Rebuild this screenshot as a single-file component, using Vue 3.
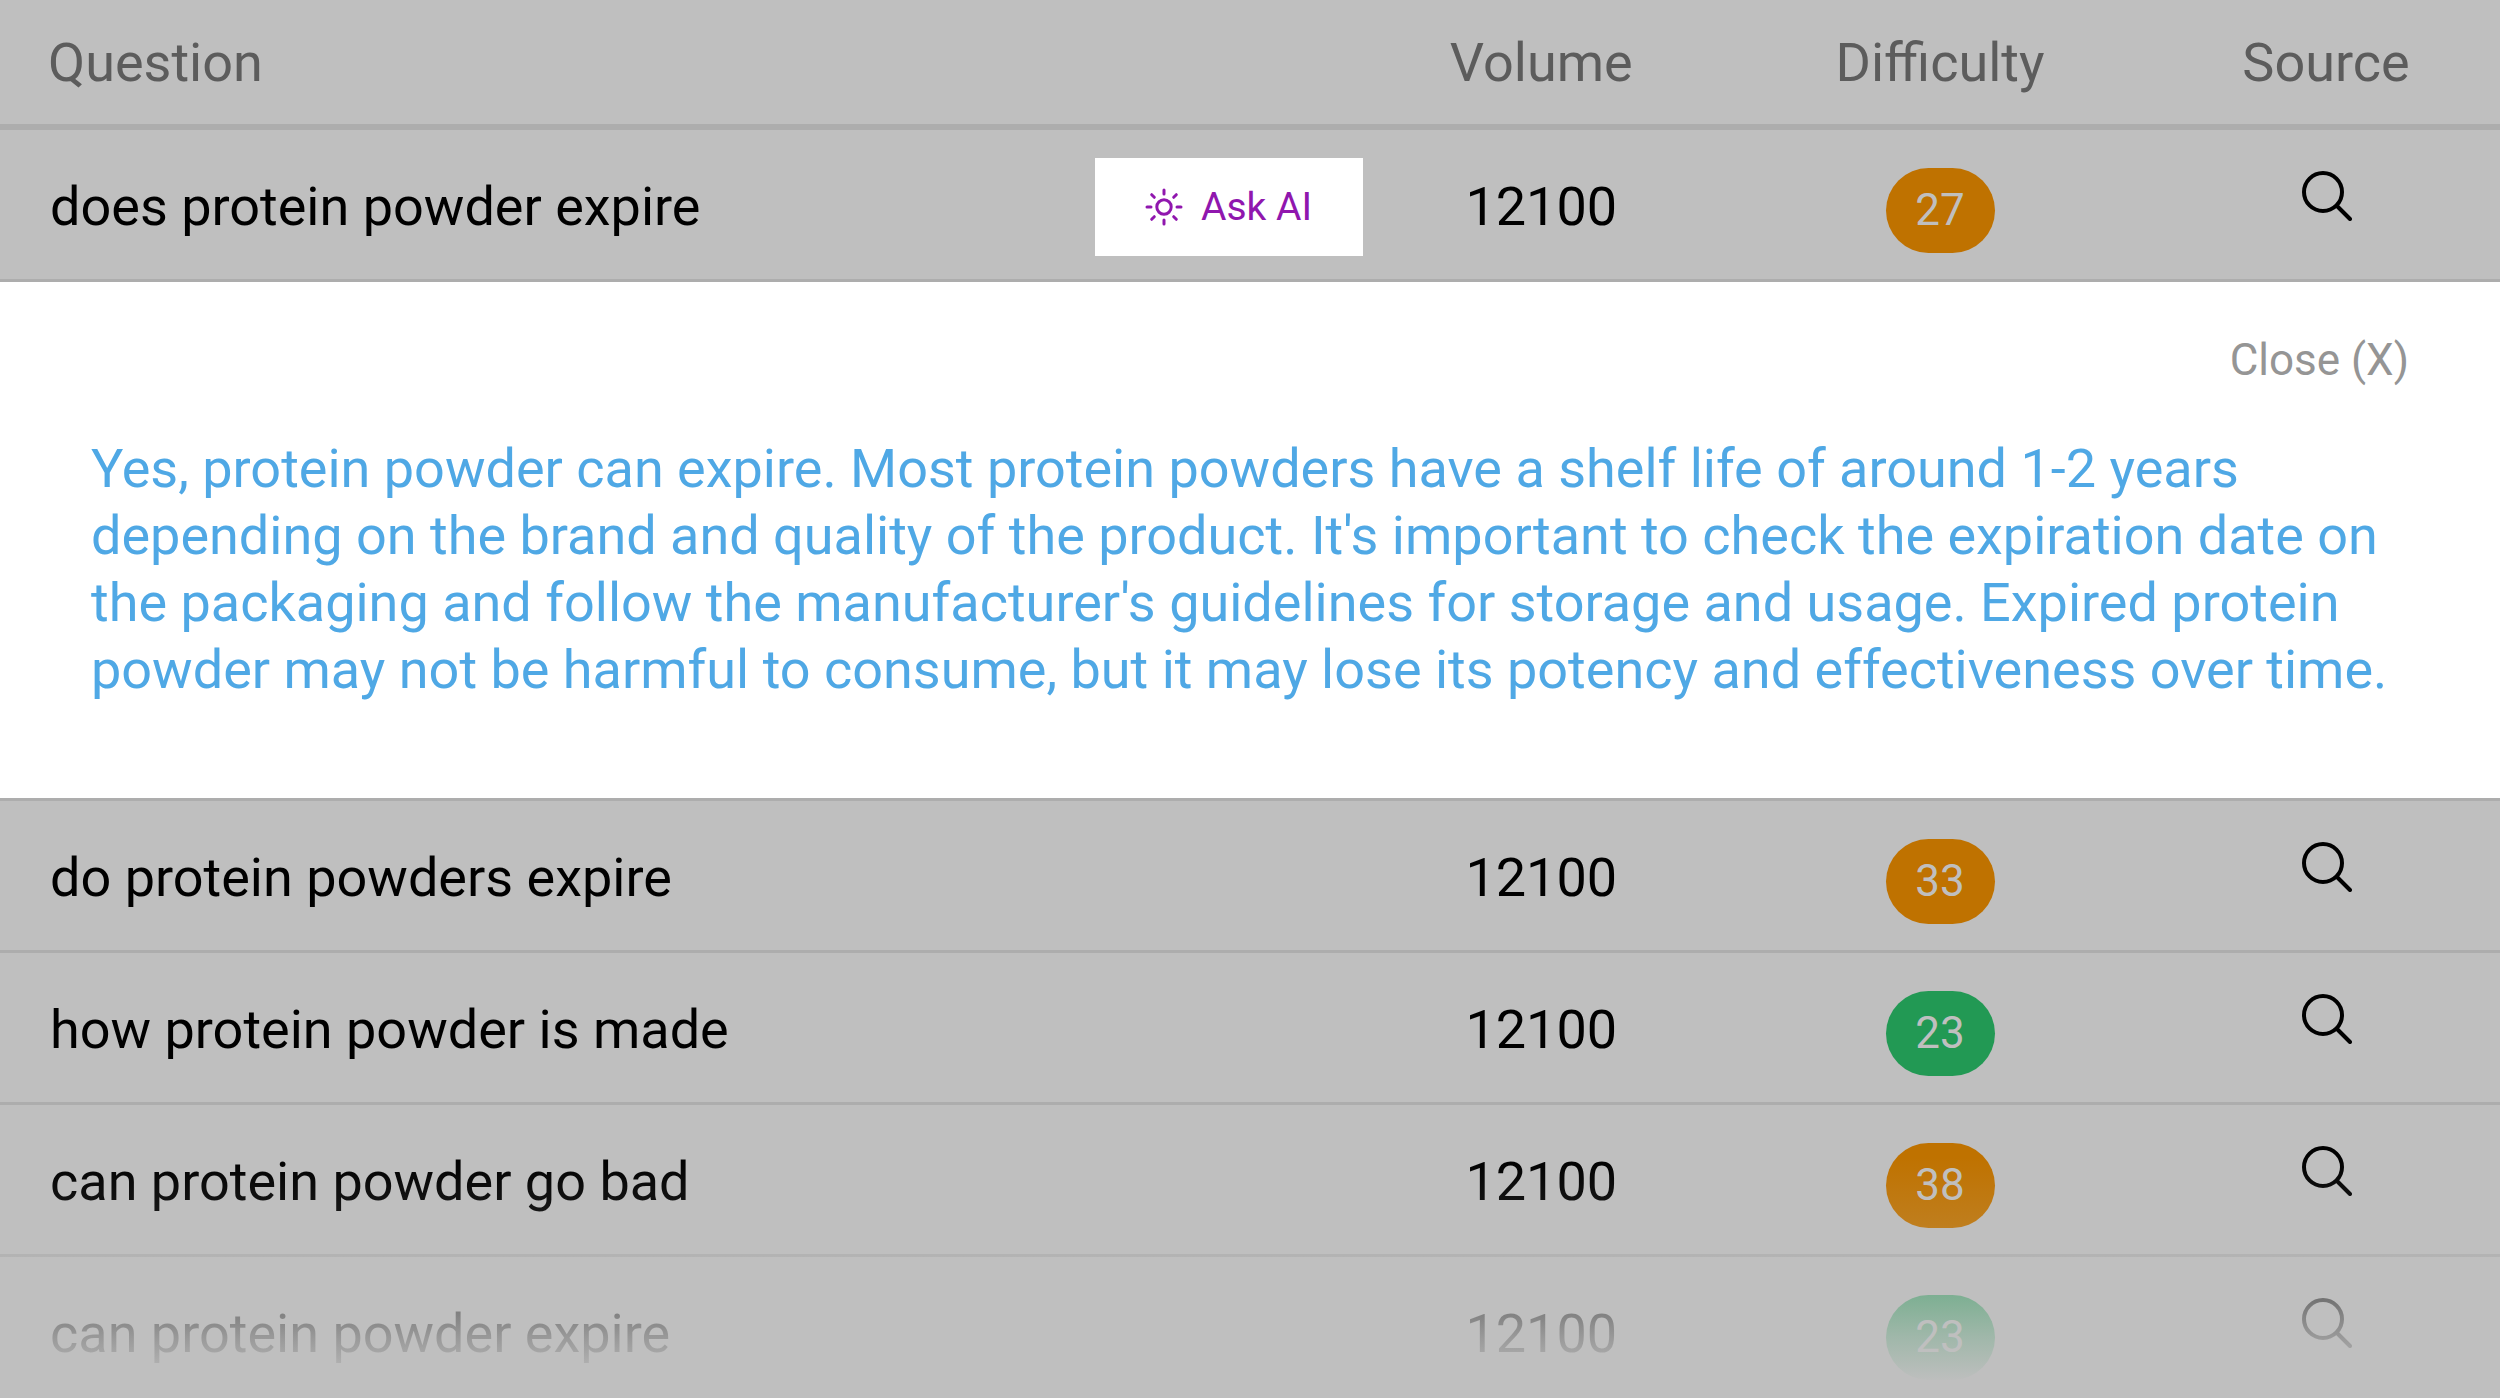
<template>
  <main class="questions">
    <table>
      <thead>
        <tr>
          <th class="col-question" scope="col">Question</th>
          <th class="col-volume" scope="col">Volume</th>
          <th class="col-difficulty" scope="col">Difficulty</th>
          <th class="col-source" scope="col">Source</th>
        </tr>
      </thead>
      <tbody>
        <template v-for="row in rows" :key="row.question">
          <tr class="row">
            <td>
              <div class="question">
                <span>{{ row.question }}</span>
                <button v-if="row.question === active" class="ask-btn" @click="open = true">
                  <svg viewBox="0 0 38 38" aria-hidden="true">
                    <circle cx="19" cy="19" r="7.2" />
                    <path d="M19 2v4M19 32v4M2 19h4M32 19h4M6.7 6.7l2.6 2.6M28.7 28.7l2.6 2.6M6.7 31.3l2.6-2.6M28.7 9.3l2.6-2.6" />
                  </svg>
                  Ask AI
                </button>
              </div>
            </td>
            <td class="volume">{{ row.volume }}</td>
            <td class="difficulty">
              <span class="badge" :class="row.difficulty < 25 ? 'easy' : 'medium'">{{ row.difficulty }}</span>
            </td>
            <td class="source">
              <button class="source-btn" :aria-label="'Search ' + row.question">
                <svg viewBox="0 0 50 50" aria-hidden="true">
                  <circle cx="21" cy="21" r="19" />
                  <path d="M35 35l13 13" />
                </svg>
              </button>
            </td>
          </tr>
          <tr v-if="open && row.question === active">
            <td class="answer" colspan="4">
              <button class="close-btn" @click="open = false">Close (X)</button>
              <p>{{ answer }}</p>
            </td>
          </tr>
        </template>
      </tbody>
    </table>
    <div class="fade"></div>
  </main>
</template>

<script setup>
import { ref } from 'vue';

const open = ref(true);
const active = ref('does protein powder expire');

const rows = [
  { question: 'does protein powder expire', volume: 12100, difficulty: 27 },
  { question: 'do protein powders expire', volume: 12100, difficulty: 33 },
  { question: 'how protein powder is made', volume: 12100, difficulty: 23 },
  { question: 'can protein powder go bad', volume: 12100, difficulty: 38 },
  { question: 'can protein powder expire', volume: 12100, difficulty: 23 },
];

const answer =
  "Yes, protein powder can expire. Most protein powders have a shelf life of around 1-2 years depending on the brand and quality of the product. It's important to check the expiration date on the packaging and follow the manufacturer's guidelines for storage and usage. Expired protein powder may not be harmful to consume, but it may lose its potency and effectiveness over time.";
</script>

<style>
body {
  margin: 0;
  background: #bfbfbf;
}
</style>

<style scoped>
.questions {
  position: relative;
  font-family: Roboto, "Liberation Sans", sans-serif;
  font-size: 54px;
  line-height: 66px;
  color: #000;
}
table {
  width: 100%;
  table-layout: fixed;
  border-collapse: separate;
  border-spacing: 0;
}
th {
  padding: 30px 0 28px;
  border-bottom: 6px solid #adadad;
  font-weight: 400;
  color: #5c5c5c;
}
.col-question {
  width: 54.5%;
  box-sizing: border-box;
  padding-left: 48px;
  text-align: left;
}
.col-volume {
  width: 14.3%;
}
.col-difficulty {
  width: 17.6%;
}
.col-source {
  padding-right: 8px;
}
.row td {
  height: 152px;
  box-sizing: border-box;
  padding: 0;
  border-bottom: 3px solid #adadad;
  vertical-align: top;
}
.row:last-child td {
  height: 140px;
  border-bottom: none;
}
.question {
  display: flex;
  justify-content: space-between;
  align-items: center;
  height: 98px;
  padding: 28px 0 0 50px;
}
.ask-btn {
  display: flex;
  align-items: center;
  justify-content: center;
  gap: 18px;
  width: 268px;
  height: 98px;
  padding: 0;
  border: none;
  background: #fff;
  color: #9017ae;
  font: inherit;
  font-size: 39px;
  cursor: pointer;
}
.ask-btn svg {
  width: 38px;
  height: 38px;
  fill: none;
  stroke: currentColor;
  stroke-width: 3;
  stroke-linecap: round;
}
.row .volume {
  padding-top: 44px;
  text-align: center;
}
.row .difficulty {
  padding-top: 38px;
  text-align: center;
}
.badge {
  display: block;
  width: 109px;
  margin: 0 auto;
  border-radius: 43px;
  font-size: 44px;
  line-height: 85px;
  color: #bfbfbf;
}
.badge.medium {
  background: #bf7200;
}
.badge.easy {
  background: #229954;
}
.row .source {
  padding: 41px 6px 0 0;
  text-align: center;
}
.source-btn {
  display: block;
  width: 50px;
  height: 50px;
  margin: 0 auto;
  padding: 0;
  border: none;
  background: none;
  color: inherit;
  cursor: pointer;
}
.source-btn svg {
  display: block;
  fill: none;
  stroke: currentColor;
  stroke-width: 4;
  stroke-linecap: round;
}
.answer {
  padding: 45px 91px 95px;
  background: #fff;
  border-bottom: 3px solid #adadad;
}
.answer p {
  margin: 42px 0 0;
  line-height: 67px;
  color: #4fa8e5;
}
.close-btn {
  display: block;
  margin-left: auto;
  padding: 0;
  border: none;
  background: none;
  color: #959595;
  font: inherit;
  font-size: 44px;
  cursor: pointer;
}
.fade {
  position: absolute;
  right: 0;
  bottom: 0;
  left: 0;
  height: 240px;
  background: linear-gradient(
    rgba(191, 191, 191, 0),
    rgba(191, 191, 191, 0.15) 28%,
    rgba(191, 191, 191, 0.6) 59%,
    rgba(191, 191, 191, 0.8) 75%,
    #bfbfbf 94%
  );
  pointer-events: none;
}
</style>
